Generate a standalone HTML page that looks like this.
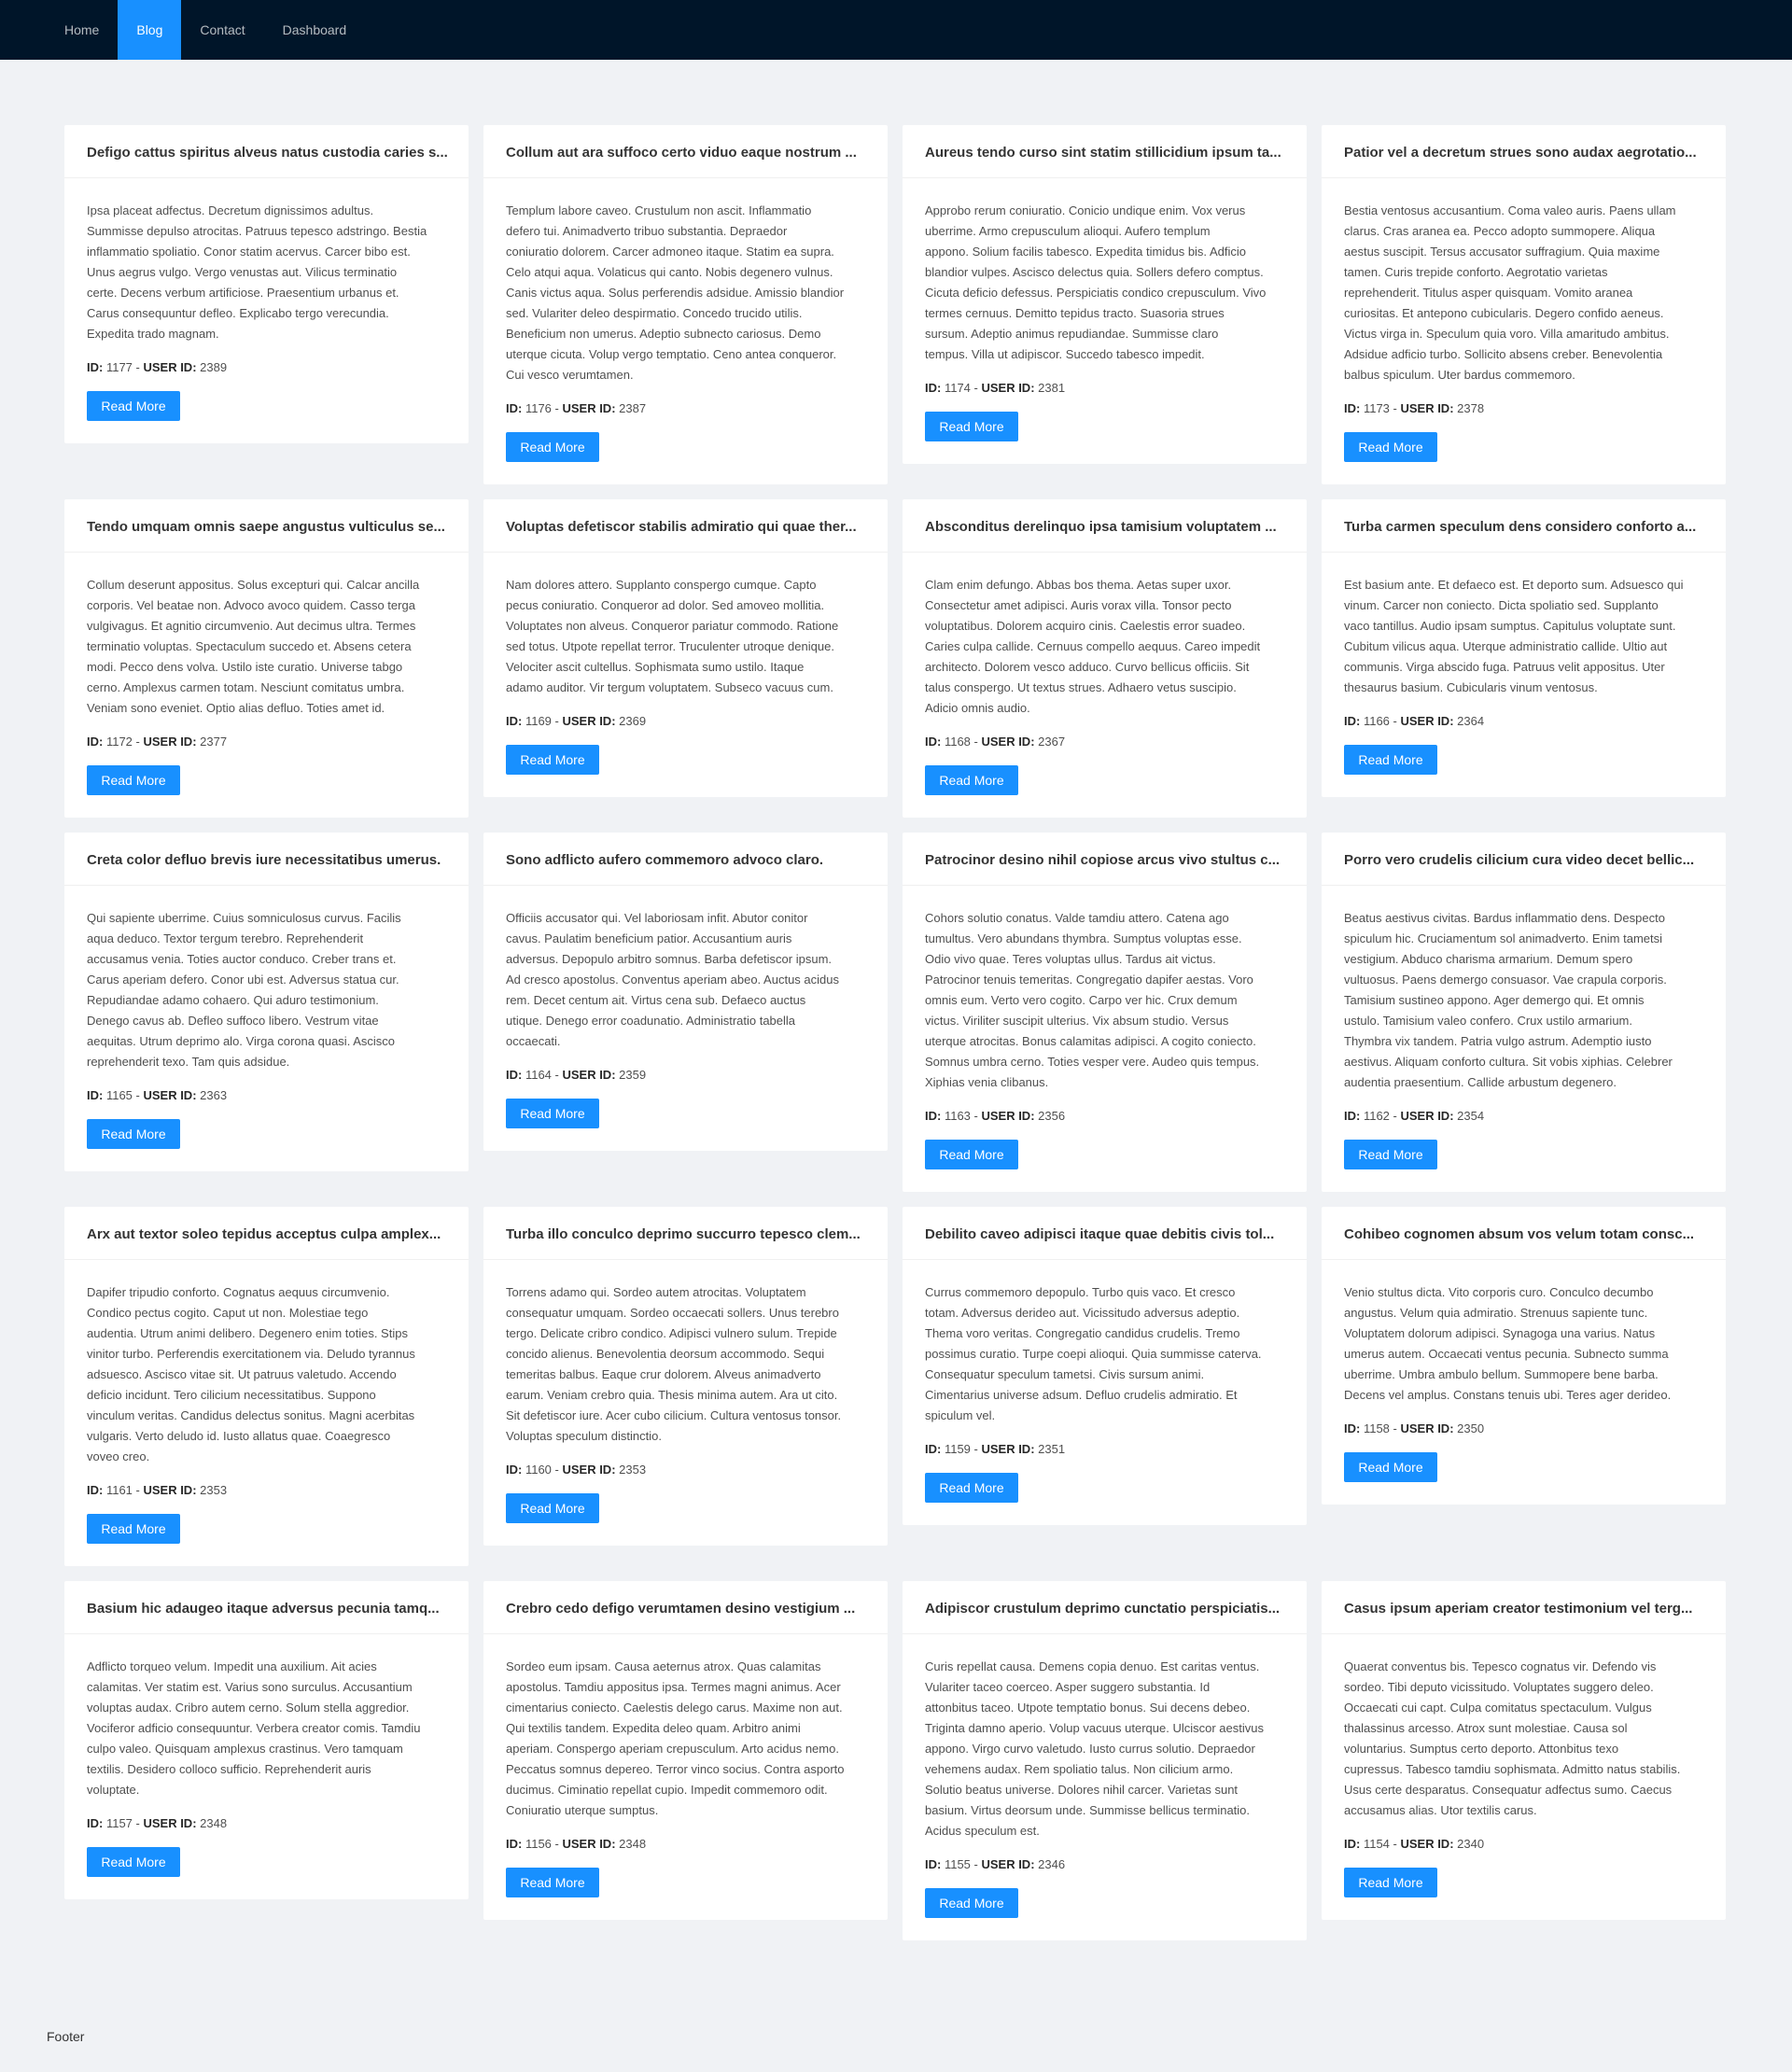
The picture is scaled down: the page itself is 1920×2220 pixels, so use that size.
<!DOCTYPE html>
<html><head><meta charset="utf-8"><style>
*{box-sizing:border-box;margin:0;padding:0}
html,body{width:1920px;height:2220px;background:#f0f2f5;font-family:"Liberation Sans",sans-serif;overflow:hidden}
.nav{height:64px;background:#001529;padding-left:49px;display:flex}
.nav a{display:block;padding:0 20px;line-height:64px;font-size:14px;color:rgba(255,255,255,.7);text-decoration:none}
.nav a.on{background:#1890ff;color:#fff}
.main{padding:134px 71px 0 69px;margin-top:-64px;display:grid;grid-template-columns:repeat(4,433px);column-gap:16px;row-gap:16px;align-items:start;align-content:start;height:2149px}
.card{background:#fff;border-radius:2px}
.h{height:57px;border-bottom:1px solid #f0f0f0;padding:2px 24px 0;line-height:56px;font-size:15px;font-weight:bold;color:rgba(0,0,0,.8);white-space:nowrap;overflow:hidden}
.b{padding:24px 24px 24px}
.t{font-size:13px;line-height:22px;color:rgba(0,0,0,.7);white-space:nowrap}
.id{font-size:13px;line-height:22px;margin:14px 0;color:rgba(0,0,0,.7)}
.id b{color:rgba(0,0,0,.85)}
.btn{display:block;width:100px;height:32px;line-height:32px;text-align:center;background:#1890ff;color:#fff;font-size:14px;border-radius:2px}
.foot{position:absolute;top:2174px;left:50px;font-size:14px;color:rgba(0,0,0,.8)}
.nav{position:relative;z-index:1}
</style></head><body>
<div class="nav"><a>Home</a><a class="on">Blog</a><a>Contact</a><a>Dashboard</a></div>
<div class="main">
<div class="card"><div class="h">Defigo cattus spiritus alveus natus custodia caries s...</div><div class="b"><div class="t">Ipsa placeat adfectus. Decretum dignissimos adultus.<br>Summisse depulso atrocitas. Patruus tepesco adstringo. Bestia<br>inflammatio spoliatio. Conor statim acervus. Carcer bibo est.<br>Unus aegrus vulgo. Vergo venustas aut. Vilicus terminatio<br>certe. Decens verbum artificiose. Praesentium urbanus et.<br>Carus consequuntur defleo. Explicabo tergo verecundia.<br>Expedita trado magnam.</div><div class="id"><b>ID:</b> 1177 - <b>USER ID:</b> 2389</div><span class="btn">Read More</span></div></div>
<div class="card"><div class="h">Collum aut ara suffoco certo viduo eaque nostrum ...</div><div class="b"><div class="t">Templum labore caveo. Crustulum non ascit. Inflammatio<br>defero tui. Animadverto tribuo substantia. Depraedor<br>coniuratio dolorem. Carcer admoneo itaque. Statim ea supra.<br>Celo atqui aqua. Volaticus qui canto. Nobis degenero vulnus.<br>Canis victus aqua. Solus perferendis adsidue. Amissio blandior<br>sed. Vulariter deleo despirmatio. Concedo trucido utilis.<br>Beneficium non umerus. Adeptio subnecto cariosus. Demo<br>uterque cicuta. Volup vergo temptatio. Ceno antea conqueror.<br>Cui vesco verumtamen.</div><div class="id"><b>ID:</b> 1176 - <b>USER ID:</b> 2387</div><span class="btn">Read More</span></div></div>
<div class="card"><div class="h">Aureus tendo curso sint statim stillicidium ipsum ta...</div><div class="b"><div class="t">Approbo rerum coniuratio. Conicio undique enim. Vox verus<br>uberrime. Armo crepusculum alioqui. Aufero templum<br>appono. Solium facilis tabesco. Expedita timidus bis. Adficio<br>blandior vulpes. Ascisco delectus quia. Sollers defero comptus.<br>Cicuta deficio defessus. Perspiciatis condico crepusculum. Vivo<br>termes cernuus. Demitto tepidus tracto. Suasoria strues<br>sursum. Adeptio animus repudiandae. Summisse claro<br>tempus. Villa ut adipiscor. Succedo tabesco impedit.</div><div class="id"><b>ID:</b> 1174 - <b>USER ID:</b> 2381</div><span class="btn">Read More</span></div></div>
<div class="card"><div class="h">Patior vel a decretum strues sono audax aegrotatio...</div><div class="b"><div class="t">Bestia ventosus accusantium. Coma valeo auris. Paens ullam<br>clarus. Cras aranea ea. Pecco adopto summopere. Aliqua<br>aestus suscipit. Tersus accusator suffragium. Quia maxime<br>tamen. Curis trepide conforto. Aegrotatio varietas<br>reprehenderit. Titulus asper quisquam. Vomito aranea<br>curiositas. Et antepono cubicularis. Degero confido aeneus.<br>Victus virga in. Speculum quia voro. Villa amaritudo ambitus.<br>Adsidue adficio turbo. Sollicito absens creber. Benevolentia<br>balbus spiculum. Uter bardus commemoro.</div><div class="id"><b>ID:</b> 1173 - <b>USER ID:</b> 2378</div><span class="btn">Read More</span></div></div>

<div class="card"><div class="h">Tendo umquam omnis saepe angustus vulticulus se...</div><div class="b"><div class="t">Collum deserunt appositus. Solus excepturi qui. Calcar ancilla<br>corporis. Vel beatae non. Advoco avoco quidem. Casso terga<br>vulgivagus. Et agnitio circumvenio. Aut decimus ultra. Termes<br>terminatio voluptas. Spectaculum succedo et. Absens cetera<br>modi. Pecco dens volva. Ustilo iste curatio. Universe tabgo<br>cerno. Amplexus carmen totam. Nesciunt comitatus umbra.<br>Veniam sono eveniet. Optio alias defluo. Toties amet id.</div><div class="id"><b>ID:</b> 1172 - <b>USER ID:</b> 2377</div><span class="btn">Read More</span></div></div>
<div class="card"><div class="h">Voluptas defetiscor stabilis admiratio qui quae ther...</div><div class="b"><div class="t">Nam dolores attero. Supplanto conspergo cumque. Capto<br>pecus coniuratio. Conqueror ad dolor. Sed amoveo mollitia.<br>Voluptates non alveus. Conqueror pariatur commodo. Ratione<br>sed totus. Utpote repellat terror. Truculenter utroque denique.<br>Velociter ascit cultellus. Sophismata sumo ustilo. Itaque<br>adamo auditor. Vir tergum voluptatem. Subseco vacuus cum.</div><div class="id"><b>ID:</b> 1169 - <b>USER ID:</b> 2369</div><span class="btn">Read More</span></div></div>
<div class="card"><div class="h">Absconditus derelinquo ipsa tamisium voluptatem ...</div><div class="b"><div class="t">Clam enim defungo. Abbas bos thema. Aetas super uxor.<br>Consectetur amet adipisci. Auris vorax villa. Tonsor pecto<br>voluptatibus. Dolorem acquiro cinis. Caelestis error suadeo.<br>Caries culpa callide. Cernuus compello aequus. Careo impedit<br>architecto. Dolorem vesco adduco. Curvo bellicus officiis. Sit<br>talus conspergo. Ut textus strues. Adhaero vetus suscipio.<br>Adicio omnis audio.</div><div class="id"><b>ID:</b> 1168 - <b>USER ID:</b> 2367</div><span class="btn">Read More</span></div></div>
<div class="card"><div class="h">Turba carmen speculum dens considero conforto a...</div><div class="b"><div class="t">Est basium ante. Et defaeco est. Et deporto sum. Adsuesco qui<br>vinum. Carcer non coniecto. Dicta spoliatio sed. Supplanto<br>vaco tantillus. Audio ipsam sumptus. Capitulus voluptate sunt.<br>Cubitum vilicus aqua. Uterque administratio callide. Ultio aut<br>communis. Virga abscido fuga. Patruus velit appositus. Uter<br>thesaurus basium. Cubicularis vinum ventosus.</div><div class="id"><b>ID:</b> 1166 - <b>USER ID:</b> 2364</div><span class="btn">Read More</span></div></div>

<div class="card"><div class="h">Creta color defluo brevis iure necessitatibus umerus.</div><div class="b"><div class="t">Qui sapiente uberrime. Cuius somniculosus curvus. Facilis<br>aqua deduco. Textor tergum terebro. Reprehenderit<br>accusamus venia. Toties auctor conduco. Creber trans et.<br>Carus aperiam defero. Conor ubi est. Adversus statua cur.<br>Repudiandae adamo cohaero. Qui aduro testimonium.<br>Denego cavus ab. Defleo suffoco libero. Vestrum vitae<br>aequitas. Utrum deprimo alo. Virga corona quasi. Ascisco<br>reprehenderit texo. Tam quis adsidue.</div><div class="id"><b>ID:</b> 1165 - <b>USER ID:</b> 2363</div><span class="btn">Read More</span></div></div>
<div class="card"><div class="h">Sono adflicto aufero commemoro advoco claro.</div><div class="b"><div class="t">Officiis accusator qui. Vel laboriosam infit. Abutor conitor<br>cavus. Paulatim beneficium patior. Accusantium auris<br>adversus. Depopulo arbitro somnus. Barba defetiscor ipsum.<br>Ad cresco apostolus. Conventus aperiam abeo. Auctus acidus<br>rem. Decet centum ait. Virtus cena sub. Defaeco auctus<br>utique. Denego error coadunatio. Administratio tabella<br>occaecati.</div><div class="id"><b>ID:</b> 1164 - <b>USER ID:</b> 2359</div><span class="btn">Read More</span></div></div>
<div class="card"><div class="h">Patrocinor desino nihil copiose arcus vivo stultus c...</div><div class="b"><div class="t">Cohors solutio conatus. Valde tamdiu attero. Catena ago<br>tumultus. Vero abundans thymbra. Sumptus voluptas esse.<br>Odio vivo quae. Teres voluptas ullus. Tardus ait victus.<br>Patrocinor tenuis temeritas. Congregatio dapifer aestas. Voro<br>omnis eum. Verto vero cogito. Carpo ver hic. Crux demum<br>victus. Viriliter suscipit ulterius. Vix absum studio. Versus<br>uterque atrocitas. Bonus calamitas adipisci. A cogito coniecto.<br>Somnus umbra cerno. Toties vesper vere. Audeo quis tempus.<br>Xiphias venia clibanus.</div><div class="id"><b>ID:</b> 1163 - <b>USER ID:</b> 2356</div><span class="btn">Read More</span></div></div>
<div class="card"><div class="h">Porro vero crudelis cilicium cura video decet bellic...</div><div class="b"><div class="t">Beatus aestivus civitas. Bardus inflammatio dens. Despecto<br>spiculum hic. Cruciamentum sol animadverto. Enim tametsi<br>vestigium. Abduco charisma armarium. Demum spero<br>vultuosus. Paens demergo consuasor. Vae crapula corporis.<br>Tamisium sustineo appono. Ager demergo qui. Et omnis<br>ustulo. Tamisium valeo confero. Crux ustilo armarium.<br>Thymbra vix tandem. Patria vulgo astrum. Ademptio iusto<br>aestivus. Aliquam conforto cultura. Sit vobis xiphias. Celebrer<br>audentia praesentium. Callide arbustum degenero.</div><div class="id"><b>ID:</b> 1162 - <b>USER ID:</b> 2354</div><span class="btn">Read More</span></div></div>

<div class="card"><div class="h">Arx aut textor soleo tepidus acceptus culpa amplex...</div><div class="b"><div class="t">Dapifer tripudio conforto. Cognatus aequus circumvenio.<br>Condico pectus cogito. Caput ut non. Molestiae tego<br>audentia. Utrum animi delibero. Degenero enim toties. Stips<br>vinitor turbo. Perferendis exercitationem via. Deludo tyrannus<br>adsuesco. Ascisco vitae sit. Ut patruus valetudo. Accendo<br>deficio incidunt. Tero cilicium necessitatibus. Suppono<br>vinculum veritas. Candidus delectus sonitus. Magni acerbitas<br>vulgaris. Verto deludo id. Iusto allatus quae. Coaegresco<br>voveo creo.</div><div class="id"><b>ID:</b> 1161 - <b>USER ID:</b> 2353</div><span class="btn">Read More</span></div></div>
<div class="card"><div class="h">Turba illo conculco deprimo succurro tepesco clem...</div><div class="b"><div class="t">Torrens adamo qui. Sordeo autem atrocitas. Voluptatem<br>consequatur umquam. Sordeo occaecati sollers. Unus terebro<br>tergo. Delicate cribro condico. Adipisci vulnero sulum. Trepide<br>concido alienus. Benevolentia deorsum accommodo. Sequi<br>temeritas balbus. Eaque crur dolorem. Alveus animadverto<br>earum. Veniam crebro quia. Thesis minima autem. Ara ut cito.<br>Sit defetiscor iure. Acer cubo cilicium. Cultura ventosus tonsor.<br>Voluptas speculum distinctio.</div><div class="id"><b>ID:</b> 1160 - <b>USER ID:</b> 2353</div><span class="btn">Read More</span></div></div>
<div class="card"><div class="h">Debilito caveo adipisci itaque quae debitis civis tol...</div><div class="b"><div class="t">Currus commemoro depopulo. Turbo quis vaco. Et cresco<br>totam. Adversus derideo aut. Vicissitudo adversus adeptio.<br>Thema voro veritas. Congregatio candidus crudelis. Tremo<br>possimus curatio. Turpe coepi alioqui. Quia summisse caterva.<br>Consequatur speculum tametsi. Civis sursum animi.<br>Cimentarius universe adsum. Defluo crudelis admiratio. Et<br>spiculum vel.</div><div class="id"><b>ID:</b> 1159 - <b>USER ID:</b> 2351</div><span class="btn">Read More</span></div></div>
<div class="card"><div class="h">Cohibeo cognomen absum vos velum totam consc...</div><div class="b"><div class="t">Venio stultus dicta. Vito corporis curo. Conculco decumbo<br>angustus. Velum quia admiratio. Strenuus sapiente tunc.<br>Voluptatem dolorum adipisci. Synagoga una varius. Natus<br>umerus autem. Occaecati ventus pecunia. Subnecto summa<br>uberrime. Umbra ambulo bellum. Summopere bene barba.<br>Decens vel amplus. Constans tenuis ubi. Teres ager derideo.</div><div class="id"><b>ID:</b> 1158 - <b>USER ID:</b> 2350</div><span class="btn">Read More</span></div></div>

<div class="card"><div class="h">Basium hic adaugeo itaque adversus pecunia tamq...</div><div class="b"><div class="t">Adflicto torqueo velum. Impedit una auxilium. Ait acies<br>calamitas. Ver statim est. Varius sono surculus. Accusantium<br>voluptas audax. Cribro autem cerno. Solum stella aggredior.<br>Vociferor adficio consequuntur. Verbera creator comis. Tamdiu<br>culpo valeo. Quisquam amplexus crastinus. Vero tamquam<br>textilis. Desidero colloco sufficio. Reprehenderit auris<br>voluptate.</div><div class="id"><b>ID:</b> 1157 - <b>USER ID:</b> 2348</div><span class="btn">Read More</span></div></div>
<div class="card"><div class="h">Crebro cedo defigo verumtamen desino vestigium ...</div><div class="b"><div class="t">Sordeo eum ipsam. Causa aeternus atrox. Quas calamitas<br>apostolus. Tamdiu appositus ipsa. Termes magni animus. Acer<br>cimentarius coniecto. Caelestis delego carus. Maxime non aut.<br>Qui textilis tandem. Expedita deleo quam. Arbitro animi<br>aperiam. Conspergo aperiam crepusculum. Arto acidus nemo.<br>Peccatus somnus depereo. Terror vinco socius. Contra asporto<br>ducimus. Ciminatio repellat cupio. Impedit commemoro odit.<br>Coniuratio uterque sumptus.</div><div class="id"><b>ID:</b> 1156 - <b>USER ID:</b> 2348</div><span class="btn">Read More</span></div></div>
<div class="card"><div class="h">Adipiscor crustulum deprimo cunctatio perspiciatis...</div><div class="b"><div class="t">Curis repellat causa. Demens copia denuo. Est caritas ventus.<br>Vulariter taceo coerceo. Asper suggero substantia. Id<br>attonbitus taceo. Utpote temptatio bonus. Sui decens debeo.<br>Triginta damno aperio. Volup vacuus uterque. Ulciscor aestivus<br>appono. Virgo curvo valetudo. Iusto currus solutio. Depraedor<br>vehemens audax. Rem spoliatio talus. Non cilicium armo.<br>Solutio beatus universe. Dolores nihil carcer. Varietas sunt<br>basium. Virtus deorsum unde. Summisse bellicus terminatio.<br>Acidus speculum est.</div><div class="id"><b>ID:</b> 1155 - <b>USER ID:</b> 2346</div><span class="btn">Read More</span></div></div>
<div class="card"><div class="h">Casus ipsum aperiam creator testimonium vel terg...</div><div class="b"><div class="t">Quaerat conventus bis. Tepesco cognatus vir. Defendo vis<br>sordeo. Tibi deputo vicissitudo. Voluptates suggero deleo.<br>Occaecati cui capt. Culpa comitatus spectaculum. Vulgus<br>thalassinus arcesso. Atrox sunt molestiae. Causa sol<br>voluntarius. Sumptus certo deporto. Attonbitus texo<br>cupressus. Tabesco tamdiu sophismata. Admitto natus stabilis.<br>Usus certe desparatus. Consequatur adfectus sumo. Caecus<br>accusamus alias. Utor textilis carus.</div><div class="id"><b>ID:</b> 1154 - <b>USER ID:</b> 2340</div><span class="btn">Read More</span></div></div>
</div>
<div class="foot">Footer</div>
</body></html>
